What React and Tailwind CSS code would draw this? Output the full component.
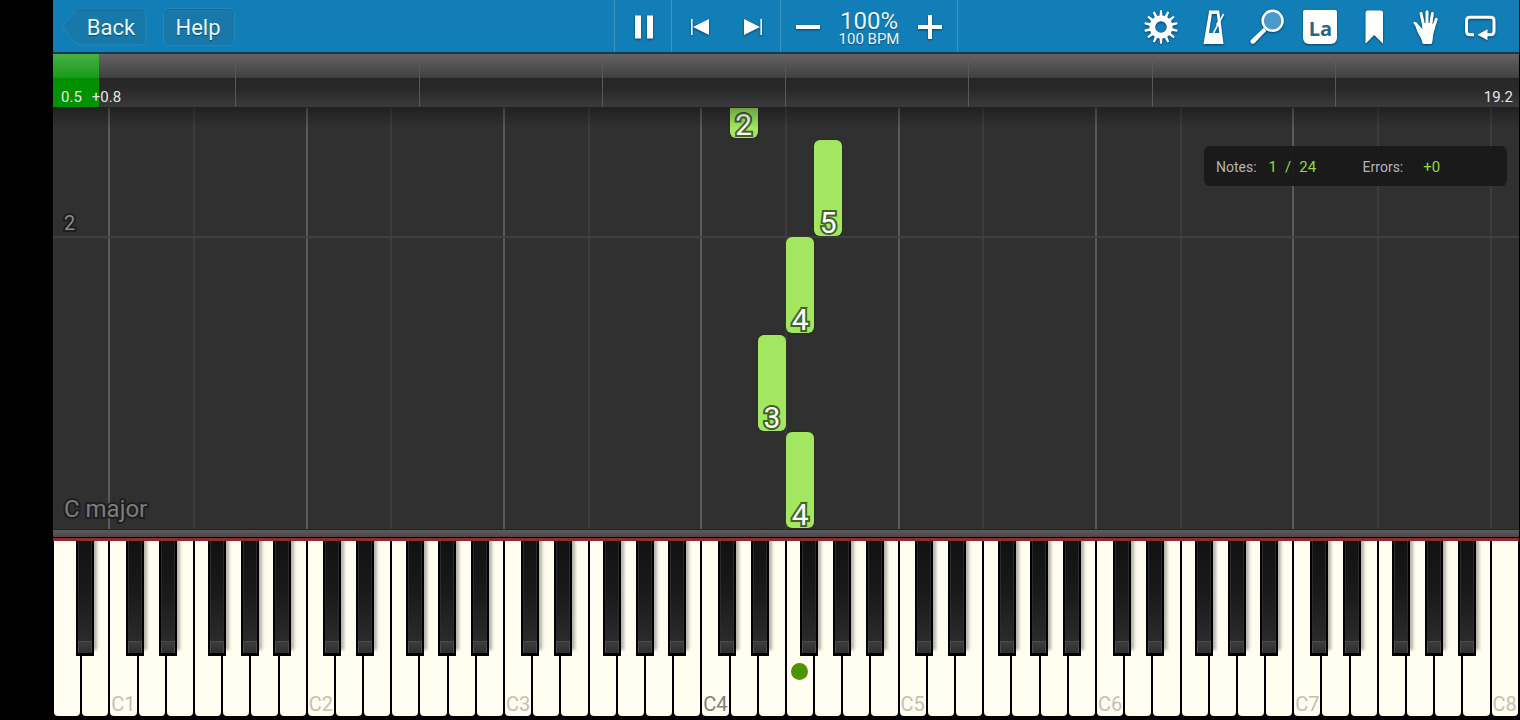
import React from "react";

const WHITE_COUNT = 52;
const UNIT = 100 / WHITE_COUNT;

// Centre of each black key, in white-key widths from the left edge.
const BLACK_KEYS = [1.14];
for (let octave = 0; octave < 7; octave++) {
  for (const offset of [2.91, 4.08, 5.83, 6.99, 8.14]) {
    BLACK_KEYS.push(offset + octave * 7);
  }
}

const OCTAVE_STARTS = Array.from({ length: 7 }, (_, i) => 2 + i * 7);
const F_STARTS = Array.from({ length: 7 }, (_, i) => 5 + i * 7);

const NOTES = [
  { key: 24, finger: 2, bottom: 391 },
  { key: 27, finger: 5, bottom: 293 },
  { key: 26, finger: 4, bottom: 196 },
  { key: 25, finger: 3, bottom: 98 },
  { key: 26, finger: 4, bottom: 1 },
];

const LETTERS = "ABCDEFG";

function gearPath(teeth, outer, inner) {
  const points = [];
  const step = (Math.PI * 2) / teeth;
  for (let i = 0; i < teeth; i++) {
    const a = i * step - Math.PI / 2;
    for (const [r, d] of [
      [inner, -0.27],
      [outer, -0.13],
      [outer, 0.13],
      [inner, 0.27],
    ]) {
      points.push(
        `${(17 + r * Math.cos(a + d * step)).toFixed(2)} ${(17 + r * Math.sin(a + d * step)).toFixed(2)}`
      );
    }
  }
  return `M${points.join("L")}ZM17 11.2a5.8 5.8 0 1 0 0 11.6a5.8 5.8 0 1 0 0-11.6Z`;
}

function Icon({ children }) {
  return (
    <svg
      viewBox="0 0 34 34"
      aria-hidden="true"
      className="size-[34px] shrink-0 overflow-visible fill-white drop-shadow-[0_1px_1px_rgba(0,40,70,0.7)]"
    >
      {children}
    </svg>
  );
}

const TOOLS = [
  {
    label: "Settings",
    icon: (
      <Icon>
        <path fillRule="evenodd" d={gearPath(14, 16.8, 11.6)} />
      </Icon>
    ),
  },
  {
    label: "Metronome",
    icon: (
      <Icon>
        <path
          fillRule="evenodd"
          d="M12.2 0.5h10L26.5 34H6.5ZM14.8 4L12 23h10.3L19.8 4Z"
        />
        <path d="M16.5 23L26.6 4" fill="none" stroke="white" strokeWidth="1.6" />
        <path d="M20.5 11.5l3.5 2-1.6 3-3.5-2Z" />
      </Icon>
    ),
  },
  {
    label: "Zoom",
    icon: (
      <Icon>
        <path d="M13.5 18L16.4 20.8L4.4 33.2Q2.4 34.6 1 32.9Q-0.2 31.4 1.2 29.8Z" />
        <circle cx="22.6" cy="10.8" r="10" fill="#4a9acb" stroke="white" strokeWidth="2.4" />
      </Icon>
    ),
  },
  {
    label: "Note names",
    icon: (
      <span className="flex size-[34px] items-center justify-center rounded-t-xs rounded-b-md bg-white pt-1 font-['Open_Sans',sans-serif] text-xl font-bold text-[#2c6580] shadow-[0_1px_2px_rgba(0,40,70,0.7)]">
        La
      </span>
    ),
  },
  {
    label: "Bookmark",
    icon: (
      <Icon>
        <path d="M10.5 0.5h13q2.5 0 2.5 2.5V33.8L17.2 25L8.5 33.8V3q0-2.5 2-2.5Z" />
      </Icon>
    ),
  },
  {
    label: "Hands",
    icon: (
      <Icon>
        <g fill="none" stroke="white" strokeLinecap="round" strokeWidth="3">
          <path d="M11 3.4L14 17" />
          <path d="M17 1.8V17" />
          <path d="M22.4 3.4L20.4 17" />
          <path d="M26.2 9.4L22.6 20" />
        </g>
        <path d="M4.2 11.7Q6.6 11.6 8.6 15L12.4 19V13H22L25.2 17Q23.6 22 23 26Q22.8 29.5 22 33.2Q21.6 34 20.4 34H13.6Q12.6 34 12.3 32.6Q11.9 29 10 26.4Q7.2 22.6 6.4 19Q5.8 16 3.5 13.2Q3.1 12.2 4.2 11.7Z" />
      </Icon>
    ),
  },
  {
    label: "Loop",
    icon: (
      <Icon>
        <path
          d="M11 24.8H7Q3.5 24.8 3.5 21.3V10.8Q3.5 7.3 7 7.3H27.5Q31 7.3 31 10.8V21.3Q31 24.8 27.5 24.8H23"
          fill="none"
          stroke="white"
          strokeWidth="3"
        />
        <path d="M14.5 24.8L24.5 19.2V30.2Z" />
      </Icon>
    ),
  },
];

function Toolbar() {
  const cell = "flex border-l border-[#3a93c4]";
  return (
    <header className="grid h-[54px] shrink-0 grid-cols-[1fr_auto_1fr] border-b-2 border-[#17394a] bg-[#117eb7] text-[#e8f6ff]">
      <div className="flex items-center gap-4 pt-0.5 pl-2">
        <button type="button" className="relative h-[38px] w-[86px] pl-3.5 text-[22px] [text-shadow:0_1px_1px_#0d4a6c]">
          <svg
            viewBox="0 0 86 38"
            preserveAspectRatio="none"
            aria-hidden="true"
            className="absolute inset-0 size-full"
          >
            <path
              d="M19 1H80Q85 1 85 6V32Q85 37 80 37H19Q16 37 14 34L2 21Q0.6 19 2 17L14 4Q16 1 19 1Z"
              fill="#1878a9"
              stroke="#2388bb"
            />
            <path d="M15 3L19 2H82" fill="none" stroke="#136a98" />
          </svg>
          <span className="relative">Back</span>
        </button>
        <button
          type="button"
          className="h-[38px] w-[72px] rounded-md border border-[#2388bb] bg-[#1878a9] pr-0.5 text-[22px] shadow-[inset_0_1px_0_#136a98] [text-shadow:0_1px_1px_#0d4a6c]"
        >
          Help
        </button>
      </div>

      <div className="flex">
        <div className={cell}>
          <button type="button" aria-label="Pause" className="flex w-14 items-center justify-center pt-0.5 pl-0.5">
            <Icon>
              <path d="M8 5.5h6v23H8zM20 5.5h6v23h-6z" />
            </Icon>
          </button>
        </div>
        <div className={cell}>
          <button type="button" aria-label="Previous" className="flex w-[54px] items-center justify-center pt-0.5 pl-0.5">
            <Icon>
              <path d="M8 9h1.6v16H8zM26 9v16L10 17Z" />
            </Icon>
          </button>
          <button type="button" aria-label="Next" className="flex w-[54px] items-center justify-center pt-0.5">
            <Icon>
              <path d="M26 9h-1.6v16H26zM8 9v16L24 17Z" />
            </Icon>
          </button>
        </div>
        <div className="flex w-[178px] items-center justify-between border-x border-[#3a93c4] px-2.5 pt-0.5">
          <button type="button" aria-label="Slower">
            <Icon>
              <path d="M5 15h24v4H5z" />
            </Icon>
          </button>
          <div className="flex flex-col items-center [text-shadow:0_1px_1px_#0d4a6c]">
            <span className="text-2xl leading-6">100%</span>
            <span className="text-[15px] leading-3">100 BPM</span>
          </div>
          <button type="button" aria-label="Faster">
            <Icon>
              <path d="M5 15h10V5h4v10h10v4H19v10h-4V19H5z" />
            </Icon>
          </button>
        </div>
      </div>

      <div className="flex items-stretch justify-end pt-0.5 pr-3">
        <div className="flex w-[373px]">
          {TOOLS.map((tool) => (
            <button
              key={tool.label}
              type="button"
              aria-label={tool.label}
              className="flex flex-1 items-center justify-center"
            >
              {tool.icon}
            </button>
          ))}
        </div>
      </div>
    </header>
  );
}

function Timeline() {
  return (
    <div className="relative shrink-0 border-b border-[#222] bg-[linear-gradient(#636363_0%,#414141_44%,#262626_46%,#282828_65%,#3a3a3a_100%)] text-[15px] text-[#e6e6e6]">
      <div className="grid h-[53px] grid-cols-8">
        {Array.from({ length: 8 }, (_, i) => (
          <div key={i} className="border-r border-[#585858] last:border-r-0" />
        ))}
      </div>
      <div className="absolute inset-y-0 left-0 w-[3.15%] bg-[linear-gradient(#45b045_0%,#1b9b1b_44%,#009000_46%,#009400_100%)]" />
      <div className="absolute inset-0 flex items-end justify-between pr-1.5 pl-2 leading-5">
        <div className="flex gap-2.5">
          <span>0.5</span>
          <span>+0.8</span>
        </div>
        <span>19.2</span>
      </div>
    </div>
  );
}

function Highway() {
  return (
    <main className="relative min-h-[420px] flex-1 overflow-hidden bg-[#303030]">
      {OCTAVE_STARTS.map((n) => (
        <div
          key={n}
          className="absolute inset-y-0 -ml-px w-0.5 bg-[#5a5a5a]"
          style={{ left: `${n * UNIT}%` }}
        />
      ))}
      {[...F_STARTS, 51].map((n) => (
        <div
          key={n}
          className="absolute inset-y-0 -ml-px w-0.5 bg-[#3c3c3c]"
          style={{ left: `${n * UNIT}%` }}
        />
      ))}
      <div className="absolute inset-x-0 bottom-[291px] h-0.5 bg-[#404040]" />

      {NOTES.map((note) => (
        <div
          key={note.bottom}
          className="absolute flex h-24 items-end justify-center rounded-md bg-[#a2e75f] shadow-[0_0_2px_#1c2a10]"
          style={{ left: `${note.key * UNIT}%`, width: `${UNIT}%`, bottom: note.bottom }}
        >
          <span className="text-3xl leading-[26px] text-white [-webkit-text-stroke:4px_#40632a] [paint-order:stroke_fill]">
            {note.finger}
          </span>
        </div>
      ))}

      <div className="absolute inset-x-0 top-0 h-5 bg-linear-to-b from-black/30 to-transparent" />

      <span className="absolute bottom-[294px] left-[11px] text-xl leading-6 text-[#8a8a8a] [-webkit-text-stroke:4px_#1e1e1e] [paint-order:stroke_fill]">
        2
      </span>
      <span className="absolute bottom-1 left-[11px] text-2xl leading-8 text-[#7c7c7c] [-webkit-text-stroke:4px_#1e1e1e] [paint-order:stroke_fill]">
        C major
      </span>

      <div className="absolute top-[38px] right-3 flex h-10 w-[303px] items-center rounded-md bg-[#191919]/95 px-3 pt-0.5 text-[#b4b4b4]">
        <span className="text-sm">Notes:</span>
        <span className="ml-3 flex w-[94px] gap-2 text-[15px] text-[#8fdc3c]">
          <span>1</span>
          <span>/</span>
          <span>24</span>
        </span>
        <span className="text-sm">Errors:</span>
        <span className="ml-5 text-[15px] text-[#8fdc3c]">+0</span>
      </div>
    </main>
  );
}

function Keyboard() {
  return (
    <footer className="shrink-0">
      <div className="h-2 border-t border-[#222] bg-linear-to-b from-[#5c5c5c] to-[#484848]" />
      <div className="h-1 border-t border-black bg-[#8e2c2a]" />
      <div className="relative mb-1 flex h-[175px] overflow-hidden bg-black">
        {Array.from({ length: WHITE_COUNT }, (_, i) => {
          const letter = LETTERS[i % 7];
          const octave = Math.floor((i + 5) / 7);
          return (
            <button
              key={i}
              type="button"
              aria-label={`${letter}${octave}`}
              className="flex min-w-0 flex-1 items-end justify-center border-x border-black bg-black text-xl leading-6"
            >
              <span className="relative flex size-full items-end justify-center rounded-b-sm bg-[#fffdf0]">
                {letter === "C" && (
                  <span className={octave === 4 ? "text-[#807e76]" : "text-[#c4c1b4]"}>
                    C{octave}
                  </span>
                )}
                {i === 26 && (
                  <span className="absolute bottom-9 size-[17px] rounded-full bg-[#4b9502]" />
                )}
              </span>
            </button>
          );
        })}
        {BLACK_KEYS.map((center) => (
          <button
            key={center}
            type="button"
            aria-label="Black key"
            className="absolute top-0 -ml-[9px] flex h-[115px] w-[18px] flex-col border-2 border-t-0 border-black bg-black pb-px shadow-[3px_-6px_3px_rgba(0,0,0,0.3)]"
            style={{ left: `${center * UNIT}%` }}
          >
            <span className="w-full flex-1 border-x border-[#2b2b2b] bg-linear-to-b from-[#121212] via-[#191919] to-[#2b2b2b]" />
            <span className="h-3 w-full border-x border-t border-[#4a4a4a] bg-linear-to-b from-[#3c3c3c] to-[#2e2e2e]" />
          </button>
        ))}
      </div>
    </footer>
  );
}

export default function App() {
  return (
    <div className="flex min-h-screen flex-col bg-black pr-px pl-[53px] font-[Roboto,sans-serif]">
      <Toolbar />
      <Timeline />
      <Highway />
      <Keyboard />
    </div>
  );
}
